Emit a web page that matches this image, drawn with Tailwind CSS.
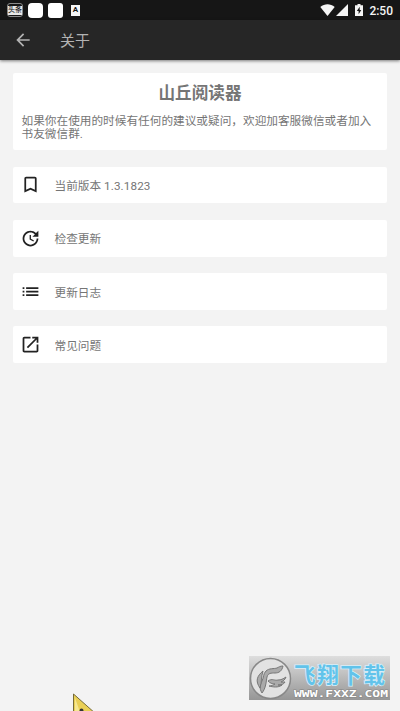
<!DOCTYPE html>
<html lang="zh-CN">
<head>
    <meta charset="UTF-8">
    <meta name="viewport" content="width=device-width, initial-scale=1.0">
    <title>关于</title>
    <script src="https://cdn.jsdelivr.net/npm/@tailwindcss/browser@4"></script>
</head>
<body class="bg-[#f3f3f3] font-['Roboto','Noto_Sans_CJK_SC',sans-serif] text-[#757575]">
    <div class="relative flex h-[711px] w-[400px] flex-col overflow-hidden">
        <!-- Status bar -->
        <div class="flex h-5 shrink-0 items-center justify-between bg-[#161616] pr-[7px] pl-[7px] text-[#f5f5f5]">
            <div class="flex items-center">
                <div class="flex h-[14px] w-4 items-center justify-center rounded-[3px] border border-[#8a8a8a] bg-[#161616]">
                    <span class="h-[9px] w-[14px] bg-[#e8e8e8] text-center text-[7px] leading-[9px] font-medium whitespace-nowrap text-[#222]">头条</span>
                </div>
                <div class="ml-[5px] size-[15px] rounded-[4px] bg-white"></div>
                <div class="ml-[5px] size-[15px] rounded-[3px] bg-white"></div>
                <div class="ml-[8px] flex h-[11px] w-[9px] items-center justify-center bg-[#f5f5f5] text-[8px] leading-none font-bold text-[#161616]">A</div>
            </div>
            <div class="flex items-center">
                <svg class="h-3 w-[15px]" viewBox="0 0 15 12" fill="currentColor"><path d="M7.5 12 .3 2.9C4.5-.6 10.5-.6 14.7 2.9z"/></svg>
                <svg class="ml-[1px] h-3 w-3" viewBox="0 0 12 12" fill="currentColor"><path d="M12 0v12H0z"/></svg>
                <svg class="ml-[7px] h-3 w-2" viewBox="0 0 8 12" fill="currentColor"><path fill-rule="evenodd" d="M2.5 0h3v1.2H8V12H0V1.2h2.5zM4.7 2.8 1.8 7h1.8v3.2L6.3 6H4.7z"/></svg>
                <span class="ml-[6px] pt-px text-[12px] leading-none font-medium">2:50</span>
            </div>
        </div>

        <!-- App bar -->
        <div class="flex h-10 shrink-0 items-center bg-[#262626] pl-[13px] text-[#b3b3b3] shadow-[0_1px_3px_rgba(0,0,0,0.5)]">
            <svg class="size-5" viewBox="0 0 24 24" fill="currentColor"><path d="M20 11H7.83l5.59-5.59L12 4l-8 8 8 8 1.41-1.41L7.83 13H20v-2z"/></svg>
            <h1 class="ml-[27px] pt-px text-[15px] leading-5">关于</h1>
        </div>

        <!-- Content -->
        <div class="flex flex-col gap-[16.6px] px-[13px] pt-[13px]">
            <div class="h-[77px] rounded-[2px] bg-white px-[8.5px] pt-[10px]">
                <h2 class="text-center text-[16.6px] leading-[22px] font-bold">山丘阅读器</h2>
                <p class="mt-[10px] text-[11.67px] leading-[13px] whitespace-nowrap">如果你在使用的时候有任何的建议或疑问，欢迎加客服微信或者加入<br>书友微信群.</p>
            </div>

            <div class="flex h-[36.7px] items-center rounded-[2px] bg-white pl-[7px]">
                <svg class="size-[21px] text-[#222]" viewBox="0 0 24 24" fill="currentColor"><path d="M17 3H7c-1.1 0-1.99.9-1.99 2L5 21l7-3 7 3V5c0-1.1-.9-2-2-2zm0 15-5-2.18L7 18V5h10v13z"/></svg>
                <span class="ml-[13.5px] pt-[1.5px] text-[11.67px] leading-4">当前版本 <span class="tracking-[0.13px]">1.3.1823</span></span>
            </div>

            <div class="flex h-[36.7px] items-center rounded-[2px] bg-white pl-[7px]">
                <svg class="size-[21px] text-[#222]" viewBox="0 0 24 24" fill="currentColor"><path d="M21 10.12h-6.78l2.74-2.82c-2.73-2.7-7.15-2.8-9.88-.1-2.73 2.71-2.73 7.08 0 9.79s7.15 2.71 9.88 0C18.32 15.65 19 14.08 19 12.1h2c0 1.98-.88 4.55-2.64 6.29-3.51 3.48-9.21 3.48-12.72 0-3.5-3.47-3.53-9.11-.02-12.58s9.14-3.47 12.65 0L21 3v7.12zM12.5 8v4.25l3.5 2.08-.72 1.21L11 13V8h1.5z"/></svg>
                <span class="ml-[13.5px] pt-[1.5px] text-[11.67px] leading-4">检查更新</span>
            </div>

            <div class="flex h-[36.7px] items-center rounded-[2px] bg-white pl-[7px]">
                <svg class="size-[21px] text-[#222]" viewBox="0 0 24 24" fill="currentColor"><path d="M3 7h2v2H3zm0 4h2v2H3zm0 4h2v2H3zM7 7h14v2H7zm0 4h14v2H7zm0 4h14v2H7z"/></svg>
                <span class="ml-[13.5px] pt-[2px] text-[11.67px] leading-4">更新日志</span>
            </div>

            <div class="flex h-[36.7px] items-center rounded-[2px] bg-white pl-[7px]">
                <svg class="size-[21px] text-[#222]" viewBox="0 0 24 24" fill="currentColor"><path d="M19 19H5V5h7V3H5c-1.11 0-2 .9-2 2v14c0 1.1.89 2 2 2h14c1.1 0 2-.9 2-2v-7h-2v7zM14 3v2h3.59l-9.83 9.83 1.41 1.41L19 6.41V10h2V3h-7z"/></svg>
                <span class="ml-[13.5px] pt-[1.5px] text-[11.67px] leading-4">常见问题</span>
            </div>
        </div>

        <!-- Site badge -->
        <div class="absolute top-[656px] left-[249px] flex h-11 w-[141px] items-center bg-linear-to-b from-[#dedede] to-[#969696]">
            <svg class="size-[43px] shrink-0" viewBox="0 0 43 43">
                <circle cx="21.5" cy="21.5" r="20" fill="#e2e2e2" stroke="#888" stroke-width="1.5"/>
                <g fill="#aaa" stroke="#777" stroke-width="1">
                    <path d="M13 36c-3-5-2-8 0-12 2-4 1-7 4-10 3-3 8-2 11-3 2-1 3-2 6-2-1 5-4 7-8 7-4 0-7 0-8 4-1 5-1 11-5 16z"/>
                    <path d="M19 24c4-3 7 0 10-1 3 0 5-1 8-3-1 3-3 4-5 5h4c-2 3-4 3-7 3h4c-4 3-9 2-13 1 3 0 4-1 6-2-3 0-5-1-7-3z"/>
                    <path d="M11 31c-5-7-3-12 3-17-2 6-1 10-3 17z"/>
                </g>
            </svg>
            <svg class="h-11 w-[97px] shrink-0 overflow-visible" viewBox="0 0 97 44">
                <text x="2" y="26.5" textLength="91" lengthAdjust="spacing" fill="#62c3ea" stroke="#d8f0fa" stroke-width="1.5" paint-order="stroke" class="font-['Noto_Sans_CJK_SC',sans-serif] text-[21.5px] font-bold">飞翔下载</text>
                <text x="2" y="41" textLength="94" lengthAdjust="spacingAndGlyphs" fill="#fff" stroke="#888" stroke-width="1" paint-order="stroke" class="font-['DejaVu_Sans_Mono',monospace] text-[9.5px] font-bold">WWW.FXXZ.COM</text>
            </svg>
        </div>

        <!-- Pointer at the bottom edge -->
        <svg class="absolute top-[693px] left-[72px] h-[18px] w-[22px]" viewBox="0 0 22 18">
            <path d="M1.5 1v20H24z" fill="#e9cf55" stroke="#746a38" stroke-width="1"/>
            <path d="M3 5v14h5z" fill="#f6e891"/>
            <circle cx="9.5" cy="17.5" r="2" fill="#333"/>
        </svg>
    </div>
</body>
</html>
